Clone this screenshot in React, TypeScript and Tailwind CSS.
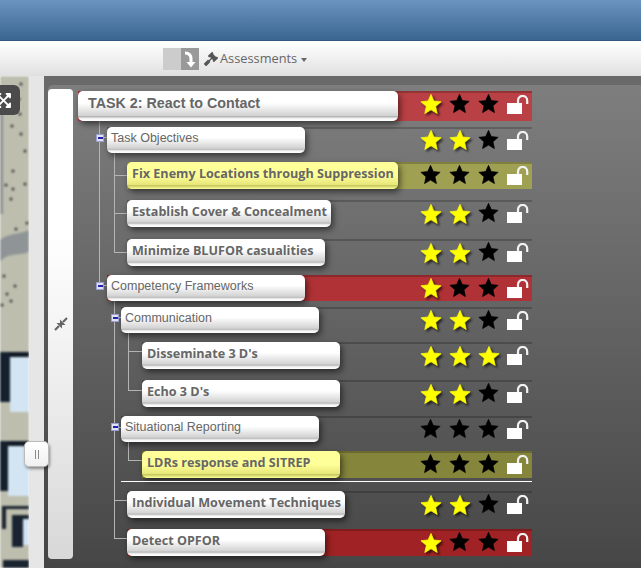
import { FaExpandArrowsAlt, FaGavel } from "react-icons/fa";

type RowData = {
  label: string;
  indent: string;
  margin: string;
  height: string;
  pill: string;
  text: string;
  bar: string;
  tint: string;
  stars: number;
};

const heading = "font-['Liberation_Sans',Arial,sans-serif] text-[12.5px] pl-[4px] pb-[4px]";
const item = "font-['Open_Sans',sans-serif] font-bold text-[12.6px] pl-[5px] pb-[3px]";

const rows: RowData[] = [
  { label: "TASK 2: React to Contact", indent: "ml-0", margin: "mt-0", height: "h-[30px]", pill: "w-[320px]", text: "font-['Liberation_Sans',Arial,sans-serif] font-bold text-[14.3px] pl-[10px] pb-[5px]", bar: "bg-[#b94044]", tint: "white", stars: 1 },
  { label: "Task Objectives", indent: "ml-[29px]", margin: "mt-[6px]", height: "h-[26px]", pill: "w-[198px]", text: heading, bar: "bg-transparent", tint: "white", stars: 2 },
  { label: "Fix Enemy Locations through Suppression", indent: "ml-[49px]", margin: "mt-[9px]", height: "h-[27px]", pill: "w-[271px]", text: item, bar: "bg-[#a0a052]", tint: "yellow", stars: 0 },
  { label: "Establish Cover & Concealment", indent: "ml-[49px]", margin: "mt-[11px]", height: "h-[27px]", pill: "w-[204px]", text: item, bar: "bg-transparent", tint: "white", stars: 2 },
  { label: "Minimize BLUFOR casualities", indent: "ml-[49px]", margin: "mt-[12px]", height: "h-[27px]", pill: "w-[198px]", text: item, bar: "bg-transparent", tint: "white", stars: 2 },
  { label: "Competency Frameworks", indent: "ml-[29px]", margin: "mt-[9px]", height: "h-[26px]", pill: "w-[198px]", text: heading, bar: "bg-[#b03236]", tint: "white", stars: 1 },
  { label: "Communication", indent: "ml-[43px]", margin: "mt-[6px]", height: "h-[26px]", pill: "w-[198px]", text: heading, bar: "bg-transparent", tint: "white", stars: 2 },
  { label: "Disseminate 3 D's", indent: "ml-[64px]", margin: "mt-[9px]", height: "h-[27px]", pill: "w-[198px]", text: item, bar: "bg-transparent", tint: "white", stars: 3 },
  { label: "Echo 3 D's", indent: "ml-[64px]", margin: "mt-[11px]", height: "h-[27px]", pill: "w-[198px]", text: item, bar: "bg-transparent", tint: "white", stars: 2 },
  { label: "Situational Reporting", indent: "ml-[43px]", margin: "mt-[9px]", height: "h-[26px]", pill: "w-[198px]", text: heading, bar: "bg-transparent", tint: "white", stars: 0 },
  { label: "LDRs response and SITREP", indent: "ml-[64px]", margin: "mt-[9px]", height: "h-[27px]", pill: "w-[198px]", text: item, bar: "bg-[#85853c]", tint: "yellow", stars: 0 },
  { label: "Individual Movement Techniques", indent: "ml-[49px]", margin: "mt-[9px]", height: "h-[27px]", pill: "w-[218px]", text: item, bar: "bg-transparent", tint: "white", stars: 2 },
  { label: "Detect OPFOR", indent: "ml-[49px]", margin: "mt-[11px]", height: "h-[27px]", pill: "w-[198px]", text: item, bar: "bg-[#a02224]", tint: "white", stars: 1 },
];

// tree connectors, relative to the tree box (origin at 78,91)
const lines = [
  "left-[21px] top-[30px] w-px h-[164px]",
  "left-[24px] top-[46px] w-[5px] h-px",
  "left-[24px] top-[194px] w-[5px] h-px",
  "left-[39px] top-[226px] w-[5px] h-px",
  "left-[39px] top-[336px] w-[5px] h-px",
  "left-[36px] top-[62px] w-px h-[100px]",
  "left-[36px] top-[84px] w-[13px] h-px",
  "left-[36px] top-[122px] w-[13px] h-px",
  "left-[36px] top-[161px] w-[13px] h-px",
  "left-[36px] top-[210px] w-px h-[238px]",
  "left-[36px] top-[409px] w-[13px] h-px",
  "left-[36px] top-[447px] w-[13px] h-px",
  "left-[50px] top-[242px] w-px h-[58px]",
  "left-[50px] top-[260px] w-[14px] h-px",
  "left-[50px] top-[299px] w-[14px] h-px",
  "left-[50px] top-[351px] w-px h-[19px]",
  "left-[50px] top-[369px] w-[14px] h-px",
];

const expanders = [
  "left-[18px] top-[43px]",
  "left-[18px] top-[191px]",
  "left-[33px] top-[223px]",
  "left-[33px] top-[332px]",
];

function Star({ on }: { on: boolean }) {
  return (
    <span className="w-[29px] flex justify-center">
      <svg
        viewBox="0 0 24 24"
        className={on ? "w-[22px] h-[22px] drop-shadow-[2px_2px_1px_rgba(0,0,0,0.65)]" : "w-[21px] h-[21px] translate-y-[-1px]"}
      >
        <path
          d="M12 1.5l3.2 7.2 7.8.8-5.9 5.2 1.7 7.7L12 18.4l-6.8 4 1.7-7.7L1 9.5l7.8-.8z"
          fill={on ? "#ffff00" : "#000000"}
          stroke={on ? "#ffff00" : "#000000"}
          strokeLinejoin="round"
          strokeWidth="0.8"
        />
      </svg>
    </span>
  );
}

function Unlock() {
  return (
    <svg viewBox="0 0 22 19" className="w-[22px] h-[19px] ml-[4px]">
      <rect x="0" y="8" width="15" height="11" fill="#ffffff" />
      <path d="M11 8V5.5a4.6 4.6 0 0 1 9.2 0V9" fill="none" stroke="#f2f2f2" strokeWidth="2.2" />
    </svg>
  );
}

function Row({ row, first }: { row: RowData; first: boolean }) {
  const pillBg =
    row.tint === "yellow"
      ? "bg-[linear-gradient(#ffff99_0%,#ffff99_50%,#e6e67a_84%,#c4c45c_86%,#ffff99_100%)]"
      : "bg-[linear-gradient(#ffffff_0%,#ffffff_40%,#d2d2d2_82%,#b4b4b4_85%,#f4f4f4_92%,#ffffff_100%)]";
  return (
    <div className={`${row.indent} ${row.margin} ${row.height} ${row.bar} flex items-center shadow-[inset_0_2px_0_rgba(0,0,0,0.2)]`}>
      <div className={`${row.pill} ${pillBg} h-full rounded-[5px] shadow-[2px_3px_6px_rgba(0,0,0,0.55)] flex items-center text-[#666666] whitespace-nowrap ${row.text}`}>
        {row.label}
      </div>
      <div className={`ml-auto flex items-center pr-[3px] ${first ? "pb-[4px]" : "pb-0"}`}>
        {[1, 2, 3].map((n) => (
          <Star key={n} on={n <= row.stars} />
        ))}
        <Unlock />
      </div>
    </div>
  );
}

function MapStrip() {
  return (
    <svg viewBox="0 0 29 492" className="w-[29px] h-[492px] block blur-[1px]" preserveAspectRatio="none">
      <rect width="29" height="492" fill="#bdbeae" />
      <rect x="0" y="20" width="3" height="118" fill="#8d9290" />
      <path d="M0 164C10 156 20 159 29 154V176C18 180 8 176 0 186z" fill="#8f9496" />
      <path d="M0 25l6 5 9 1" fill="none" stroke="#333" strokeWidth="1" />
      {[[21,8],[12,50],[21,58],[25,75],[13,95],[6,109],[13,113],[11,123],[27,147],[16,153],[4,200],[15,210],[7,218],[11,225],[2,229],[20,38],[19,23],[25,108]].map(([x, y], i) => (
        <circle key={i} cx={x} cy={y} r="1.5" fill="#3c3c38" />
      ))}
      <rect x="0" y="276" width="29" height="6" fill="#121a26" />
      <rect x="0" y="276" width="10" height="50" fill="#14202e" />
      <rect x="10" y="281" width="19" height="55" fill="#d3e4f3" />
      <rect x="0" y="365" width="29" height="5" fill="#121a26" />
      <rect x="0" y="365" width="8" height="50" fill="#14202e" />
      <rect x="8" y="370" width="21" height="50" fill="#d3e4f3" />
      <rect x="2" y="430" width="27" height="3" fill="#1a2430" />
      <rect x="2" y="430" width="4" height="23" fill="#1a2430" />
      <rect x="12" y="439" width="17" height="4" fill="#1a2430" />
      <rect x="12" y="439" width="11" height="32" fill="#1a2430" />
      <rect x="23" y="443" width="6" height="26" fill="#d3e4f3" />
      <rect x="3" y="484" width="26" height="8" fill="#1a2430" />
    </svg>
  );
}

export default function App() {
  return (
    <div className="relative w-[641px] h-[568px] overflow-hidden flex flex-col font-['Open_Sans',sans-serif]">
      <div className="h-[41px] shrink-0 bg-[linear-gradient(#6b95bf,#3b6591)] border-b border-[#34587e]" />
      <div className="h-[34px] shrink-0 mt-px bg-[linear-gradient(#ffffff,#e0e0e0)] flex items-center pl-[163px]">
        <div className="flex h-[22px] w-[36px]">
          <span className="w-[18px] bg-[#cccccc]" />
          <span className="w-[18px] bg-[#999999] flex items-center justify-center">
            <svg viewBox="0 0 12 18" className="w-[12px] h-[18px]">
              <path d="M1 3c4 0 6 2 6 6v4" fill="none" stroke="#ffffff" strokeWidth="3" />
              <path d="M2.5 12h9L7 17.5z" fill="#ffffff" />
            </svg>
          </span>
        </div>
        <FaGavel className="ml-[5px] w-[14px] h-[14px] text-[#555555]" />
        <span className="ml-[2px] text-[12.8px] text-[#666666]">Assessments</span>
        <span className="ml-[4px] mt-[1px] border-x-[3.5px] border-t-[4px] border-x-transparent border-t-[#666666]" />
      </div>

      <div className="flex-1 flex min-h-0">
        <div className="relative w-[29px] shrink-0 overflow-hidden">
          <MapStrip />
          <div className="absolute left-[-10px] top-[9px] w-[30px] h-[30px] rounded-[6px] bg-[#4b4b4b] flex items-center justify-center text-white">
            <FaExpandArrowsAlt className="ml-[-4px] w-[17px] h-[17px]" />
          </div>
        </div>
        <div className="w-[15px] shrink-0 bg-[#e6e6e6]" />
        <div className="flex-1 bg-[linear-gradient(#6a6a6a,#454545)] pl-[4px] pt-[9px]">
          <div className="h-[478px] rounded-tl-[5px] rounded-bl-[5px] bg-[linear-gradient(#7e7e7e,#474747)] flex items-start pt-[4px]">
            <div className="w-[25px] h-[470px] shrink-0 rounded-[4px] bg-[linear-gradient(#ffffff_0%,#ffffff_30%,#f2f2f2_55%,#d8d8d8_100%)] flex items-center justify-center pb-[1px]">
              <svg viewBox="0 0 14 14" className="w-[14px] h-[14px]">
                <path d="M1 13l4-4M13 1L9 5" stroke="#666666" strokeWidth="2.2" />
                <path d="M2.5 6h5.5v5.5zM11.5 8H6V2.5z" fill="#666666" />
              </svg>
            </div>
            <div className="relative ml-[5px] mt-[2px] w-[454px] flex flex-col">
              {lines.map((cls) => (
                <span key={cls} className={`absolute bg-[#b4b4b4] ${cls}`} />
              ))}
              {rows.map((row, i) => (
                <div key={row.label} className="relative">
                  {i === 11 && <div className="ml-[43px] mt-[3px] h-px bg-white" />}
                  <Row row={row} first={i === 0} />
                </div>
              ))}
              {expanders.map((cls) => (
                <span key={cls} className={`absolute ${cls} w-[8px] h-[8px] bg-[#dfe2f5] border border-[#9a9fd0] flex items-center justify-center`}>
                  <span className="w-[5px] h-[1.5px] bg-[#2222aa]" />
                </span>
              ))}
            </div>
          </div>
        </div>
      </div>

      <div className="absolute left-[24px] top-[441px] w-[25px] h-[26px] rounded-[5px] bg-[linear-gradient(#ffffff,#f0f0f0)] border border-[#bbbbbb] shadow-[1px_2px_3px_rgba(0,0,0,0.4)] flex items-center justify-center gap-[2px]">
        <span className="w-px h-[9px] bg-[#888888]" />
        <span className="w-px h-[9px] bg-[#888888]" />
      </div>
    </div>
  );
}
